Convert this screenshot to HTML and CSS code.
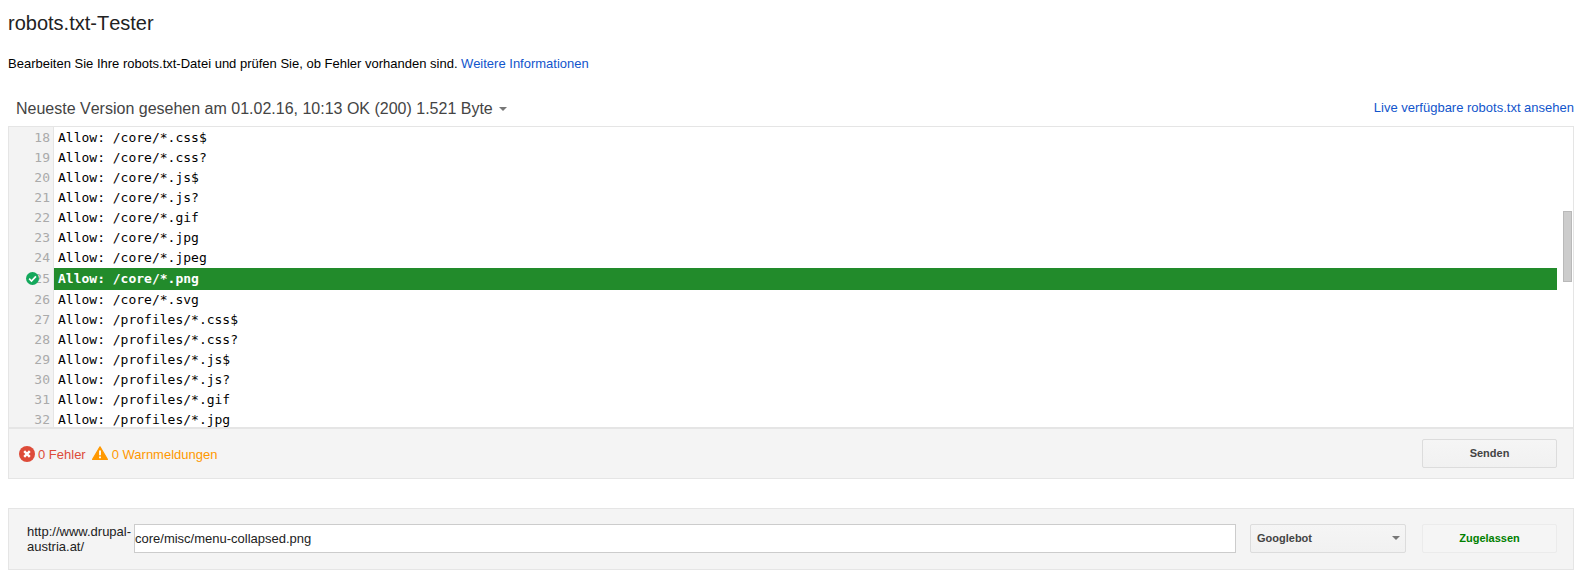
FILE: index.html
```html
<!DOCTYPE html>
<html lang="de">
<head>
<meta charset="utf-8">
<title>robots.txt-Tester</title>
<link rel="stylesheet" href="styles.css">
</head>
<body>
<h1 class="title">robots.txt-Tester</h1>
<p class="intro">Bearbeiten Sie Ihre robots.txt-Datei und prüfen Sie, ob Fehler vorhanden sind. <a href="#">Weitere Informationen</a></p>
<div class="version-bar">
  <div class="version">Neueste Version gesehen am 01.02.16, 10:13 OK (200) 1.521 Byte <span class="caret"></span></div>
  <a href="#" class="live">Live verfügbare robots.txt ansehen</a>
</div>
<section class="editor-card">
  <div class="editor">
    <div class="gutter">
      <div class="ln">18</div><div class="ln">19</div><div class="ln">20</div><div class="ln">21</div><div class="ln">22</div><div class="ln">23</div><div class="ln">24</div>
      <div class="ln ln-hit"><svg class="ok" viewBox="0 0 14 14"><circle cx="7" cy="7" r="7" fill="#14a85c"/><path d="M3.4 7.2l2.5 2.5 4.8-5" fill="none" stroke="#fff" stroke-width="1.8"/></svg>25</div>
      <div class="ln">26</div><div class="ln">27</div><div class="ln">28</div><div class="ln">29</div><div class="ln">30</div><div class="ln">31</div><div class="ln">32</div>
    </div>
    <div class="code">
      <div class="row">Allow: /core/*.css$</div>
      <div class="row">Allow: /core/*.css?</div>
      <div class="row">Allow: /core/*.js$</div>
      <div class="row">Allow: /core/*.js?</div>
      <div class="row">Allow: /core/*.gif</div>
      <div class="row">Allow: /core/*.jpg</div>
      <div class="row">Allow: /core/*.jpeg</div>
      <div class="row row-hit">Allow: /core/*.png</div>
      <div class="row">Allow: /core/*.svg</div>
      <div class="row">Allow: /profiles/*.css$</div>
      <div class="row">Allow: /profiles/*.css?</div>
      <div class="row">Allow: /profiles/*.js$</div>
      <div class="row">Allow: /profiles/*.js?</div>
      <div class="row">Allow: /profiles/*.gif</div>
      <div class="row">Allow: /profiles/*.jpg</div>
    </div>
    <div class="scrollbar"></div>
  </div>
  <div class="editor-foot">
    <div class="status">
      <svg class="stat-icon" viewBox="0 0 16 16"><circle cx="8" cy="8" r="8" fill="#dd4b39"/><path d="M5.2 5.2l5.6 5.6M10.8 5.2l-5.6 5.6" stroke="#fff" stroke-width="2.4"/></svg>
      <span class="err">0 Fehler</span>
      <svg class="stat-icon warn-icon" viewBox="0 0 16 14"><path d="M8 .8L15.4 13.4H.6z" fill="#ff9800" stroke="#ff9800" stroke-width="1.2" stroke-linejoin="round"/><path d="M8 4.5v4.8M8 10.4v1.8" stroke="#fff" stroke-width="1.8"/></svg>
      <span class="warn">0 Warnmeldungen</span>
    </div>
    <button class="btn" type="button">Senden</button>
  </div>
</section>
<section class="test-card">
  <div class="host">http://www.drupal-austria.at/</div>
  <input class="url" type="text" value="core/misc/menu-collapsed.png">
  <div class="agent"><span>Googlebot</span><span class="caret caret-sm"></span></div>
  <button class="btn btn-result" type="button">Zugelassen</button>
</section>
</body>
</html>
```
FILE: styles.css
```css
* { box-sizing: border-box; }
html, body { margin: 0; padding: 0; }
body {
  padding: 0 7px 0 8px;
  background: #fff;
  color: #000;
  font-family: "Liberation Sans", Arial, sans-serif;
  height: 582px;
  overflow: hidden;
}
a { color: #1155cc; text-decoration: none; }
.title {
  margin: 0;
  padding-top: 11px;
  padding-bottom: 1px;
  font-size: 20px;
  line-height: 24px;
  font-weight: 400;
  font-kerning: none;
  color: #222;
}
.intro {
  margin: 0;
  padding-top: 19px;
  font-size: 13px;
  line-height: 18px;
}
.version-bar {
  display: flex;
  justify-content: space-between;
  align-items: flex-start;
  margin-top: 25px;
  height: 28px;
  padding-left: 8px;
}
.version { font-size: 16px; line-height: 21px; font-kerning: none; color: #444; }
.caret {
  display: inline-block;
  width: 0; height: 0;
  margin-left: 2px;
  vertical-align: 3px;
  border-left: 4px solid transparent;
  border-right: 4px solid transparent;
  border-top: 4px solid #777;
}
.live { font-size: 13px; line-height: 19px; }
.editor-card {
  border: 1px solid #e5e5e5;
  background: #f4f4f4;
}
.editor {
  display: flex;
  height: 302px;
  overflow: hidden;
  background: #fff;
  border-bottom: 2px solid #e5e5e5;
}
.gutter {
  width: 45px;
  flex: none;
  background: #f3f3f3;
  border-right: 1px solid #e5e5e5;
  padding-top: 1px;
  font-family: "DejaVu Sans Mono", monospace;
  font-size: 13px;
  color: #aaa;
}
.ln { position: relative; height: 20px; line-height: 20px; text-align: right; padding-right: 3px; }
.ln-hit { height: 22px; line-height: 22px; }
.ok { position: absolute; left: 17px; top: 4px; width: 13px; height: 13px; }
.code {
  flex: 1;
  padding-top: 1px;
  font-family: "DejaVu Sans Mono", monospace;
  font-size: 13px;
  color: #000;
}
.row { height: 20px; line-height: 20px; padding-left: 4px; }
.row-hit { height: 22px; line-height: 22px; background: #228b2b; color: #fff; font-weight: 700; }
.scrollbar {
  align-self: flex-start;
  flex: none;
  width: 9px;
  height: 71px;
  margin: 84px 1px 0 6px;
  background: #ccc;
  border: 1px solid #b9b9b9;
}
.editor-foot {
  display: flex;
  justify-content: space-between;
  align-items: center;
  height: 49px;
  padding: 0 16px 1px 10px;
}
.status { display: flex; align-items: center; margin-top: 2px; font-size: 13px; }
.stat-icon { width: 16px; height: 16px; margin-right: 3px; }
.warn-icon { margin-left: 6px; width: 16px; height: 14px; margin-right: 4px; margin-bottom: 2px; }
.err { color: #dd4b39; }
.warn { color: #ff9800; }
.btn {
  width: 135px;
  height: 29px;
  padding: 0;
  border: 1px solid #dcdcdc;
  border-radius: 2px;
  background: linear-gradient(#f5f5f5, #f1f1f1);
  font: 700 11px "Liberation Sans", Arial, sans-serif;
  color: #444;
}
.test-card {
  display: flex;
  align-items: center;
  margin-top: 29px;
  height: 62px;
  padding: 0 16px 2px 18px;
  border: 1px solid #e5e5e5;
  background: #f4f4f4;
}
.host { width: 107px; flex: none; margin-top: 2px; font-size: 13px; line-height: 15px; color: #222; }
.url {
  width: 1102px;
  height: 29px;
  flex: none;
  padding: 0;
  border: 1px solid #ccc;
  background: #fff;
  font: 13px "Liberation Sans", Arial, sans-serif;
  color: #222;
  outline: none;
}
.agent {
  display: flex;
  justify-content: space-between;
  align-items: center;
  width: 156px;
  height: 29px;
  flex: none;
  margin-left: 14px;
  padding: 0 5px 0 6px;
  border: 1px solid #dcdcdc;
  border-radius: 2px;
  background: linear-gradient(#f5f5f5, #f1f1f1);
  font-size: 11px;
  font-weight: 700;
  color: #444;
}
.caret-sm { margin: 0; vertical-align: 0; }
.btn-result {
  margin-left: 16px;
  border-color: #ebebeb;
  background: #f5f5f5;
  color: #008000;
  flex: none;
}
```
